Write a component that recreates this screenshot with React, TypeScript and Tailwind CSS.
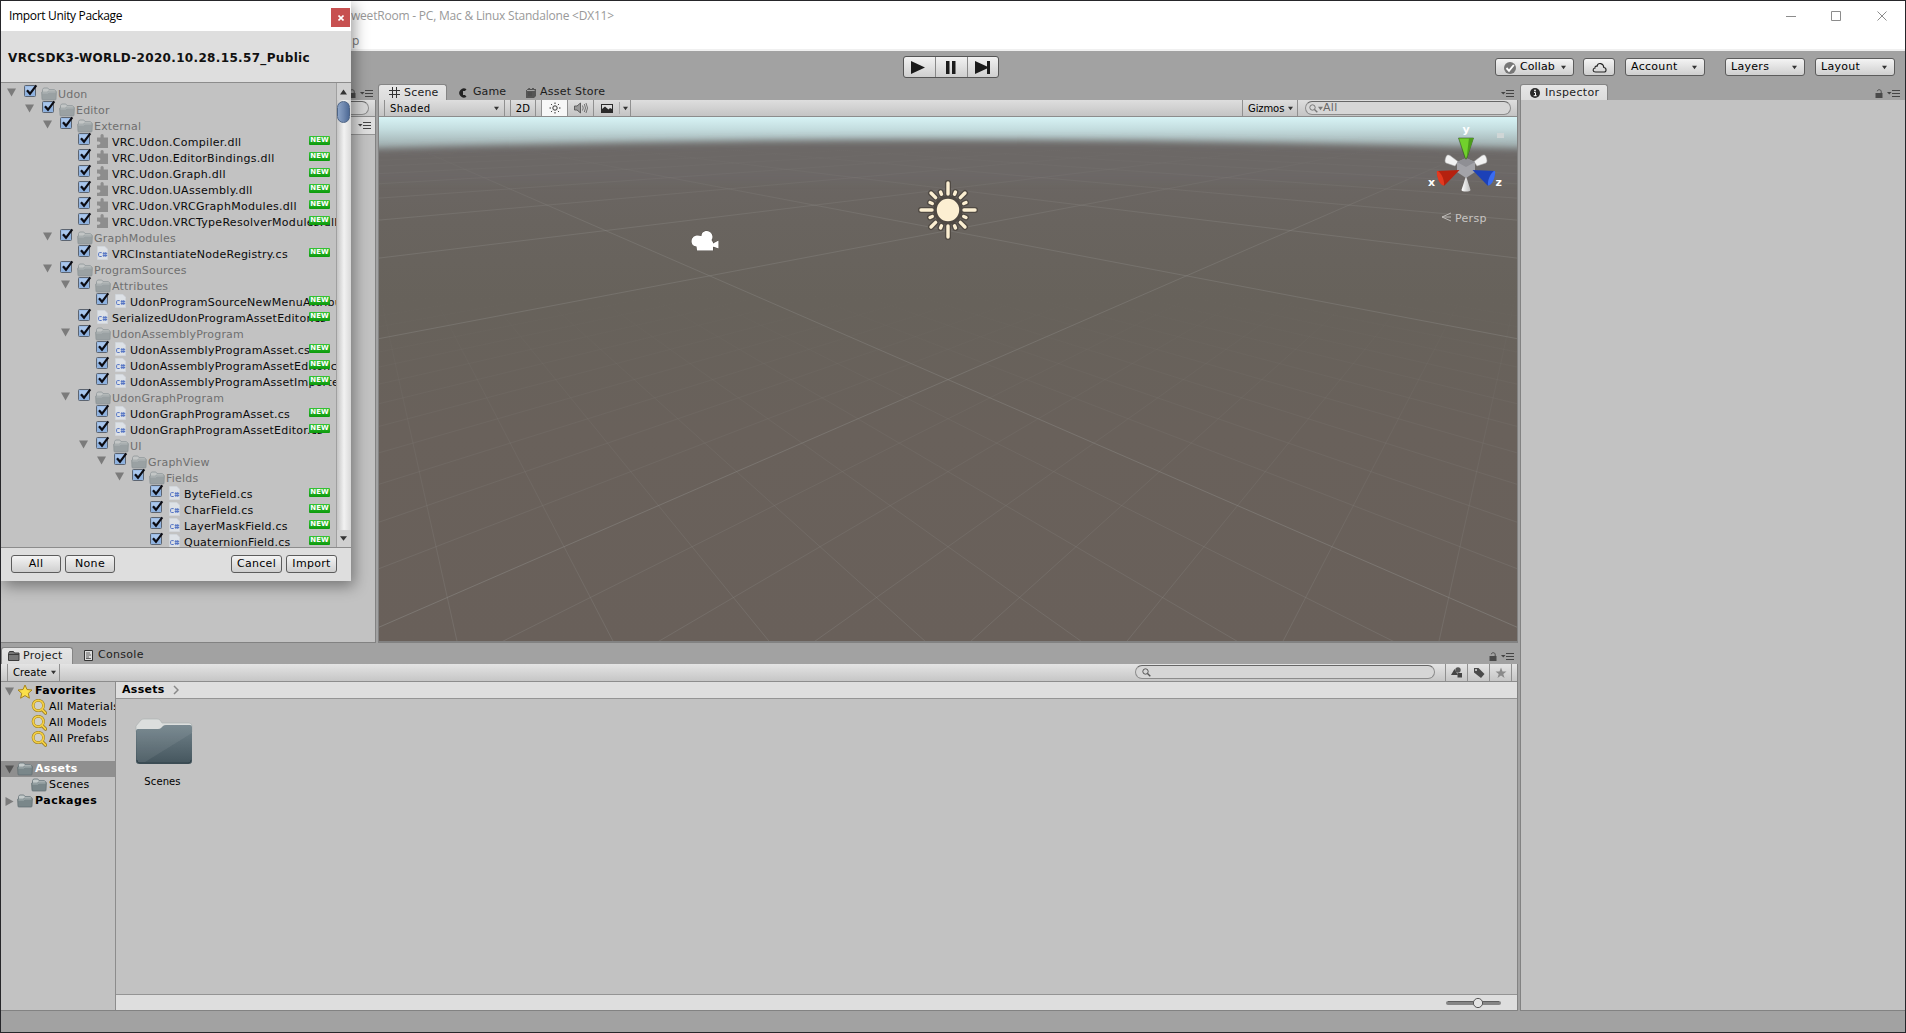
import type { ReactNode } from "react";

type Kind = "folder" | "dll" | "cs";
type Row = [depth: number, kind: Kind, name: string];

const rows: Row[] = [
  [0, "folder", "Udon"],
  [1, "folder", "Editor"],
  [2, "folder", "External"],
  [3, "dll", "VRC.Udon.Compiler.dll"],
  [3, "dll", "VRC.Udon.EditorBindings.dll"],
  [3, "dll", "VRC.Udon.Graph.dll"],
  [3, "dll", "VRC.Udon.UAssembly.dll"],
  [3, "dll", "VRC.Udon.VRCGraphModules.dll"],
  [3, "dll", "VRC.Udon.VRCTypeResolverModules.dll"],
  [2, "folder", "GraphModules"],
  [3, "cs", "VRCInstantiateNodeRegistry.cs"],
  [2, "folder", "ProgramSources"],
  [3, "folder", "Attributes"],
  [4, "cs", "UdonProgramSourceNewMenuAttribute.cs"],
  [3, "cs", "SerializedUdonProgramAssetEditor.cs"],
  [3, "folder", "UdonAssemblyProgram"],
  [4, "cs", "UdonAssemblyProgramAsset.cs"],
  [4, "cs", "UdonAssemblyProgramAssetEditor.cs"],
  [4, "cs", "UdonAssemblyProgramAssetImporter.cs"],
  [3, "folder", "UdonGraphProgram"],
  [4, "cs", "UdonGraphProgramAsset.cs"],
  [4, "cs", "UdonGraphProgramAssetEditor.cs"],
  [4, "folder", "UI"],
  [5, "folder", "GraphView"],
  [6, "folder", "Fields"],
  [7, "cs", "ByteField.cs"],
  [7, "cs", "CharField.cs"],
  [7, "cs", "LayerMaskField.cs"],
  [7, "cs", "QuaternionField.cs"],
];

/* ---------- icons ---------- */

function FolderIcon({ faded = false }: { faded?: boolean }) {
  return (
    <svg width="16" height="14" viewBox="0 0 16 14" className={faded ? "shrink-0 opacity-55" : "shrink-0"}>
      <path d="M1.5 6V2.6L2.6 1h4.2l1.2 1.6h5.5l.9 1V6z" fill="#c4cbcb" stroke="#6f7c80" strokeWidth="0.9" />
      <path d="M.6 5.2h5.6l1.2-1h7.4c.4 0 .6.2.6.6l-.4 7.4c0 .5-.3.8-.8.8H1.800c-.5 0-.8-.3-.8-.8z" fill="#7a878a" stroke="#5f6c70" strokeWidth="0.7" />
      <path d="M1.400 5.900h5.200l1.200-1h6.800" fill="none" stroke="#b4bec0" strokeWidth="0.9" />
    </svg>
  );
}

function DllIcon() {
  return (
    <svg width="11" height="14" viewBox="0 0 11 14" className="shrink-0">
      <path d="M0 3.5h3.5V1.8C3.5.8 4.2 0 5.1 0s1.6.8 1.6 1.8v1.7H11V14H0v-3.2h1.6c1 0 1.8-.8 1.8-1.7S2.600 7.400 1.600 7.400H0z" fill="#8d8d8d" />
    </svg>
  );
}

function CsIcon() {
  return (
    <svg width="11" height="14" viewBox="0 0 11 14" className="shrink-0">
      <path d="M.3.300h7.500L10.700 3.200V13.700H.3z" fill="#dde1e6" stroke="#cdd2d8" strokeWidth="0.6" />
      <path d="M4.700 6.600H2.600c-.7 0-1 .3-1 1v1.900c0 .7.3 1 1 1h2.100M6.900 6v5M8.800 6v5M5.700 7.600h4.500M5.700 9.500h4.500" fill="none" stroke="#5675c4" strokeWidth="1" />
    </svg>
  );
}

function Down({ size = 6, color = "#333" }: { size?: number; color?: string }) {
  return (
    <svg width={size} height={size} viewBox="0 0 6 6" className="shrink-0">
      <path d="M0 1h6L3 5z" fill={color} />
    </svg>
  );
}

function Foldout({ open = true, dark = false }: { open?: boolean; dark?: boolean }) {
  return (
    <svg width="9" height="9" viewBox="0 0 9 9" className="shrink-0">
      <path d={open ? "M0 .5h9L4.500 8.500z" : "M.5 0v9l8-4.500z"} fill={dark ? "#555" : "#7b7b7b"} />
    </svg>
  );
}

function Checkbox() {
  return (
    <svg width="14" height="13" viewBox="0 0 14 13" className="shrink-0">
      <rect x=".5" y="1.500" width="11" height="11" rx="1" fill="#8fb2df" stroke="#5c6470" />
      <rect x="1.500" y="2.500" width="9" height="4" fill="#a9c6ec" />
      <path d="M3 6.200l3 3.600L12.300 1.300" fill="none" stroke="#0b0b12" strokeWidth="2.200" />
    </svg>
  );
}

function PanelMenu() {
  return (
    <svg width="13" height="7" viewBox="0 0 13 7" className="shrink-0">
      <path d="M0 2h4.500L2.250 4.500z" fill="#444" />
      <path d="M5 .5h8M5 3.500h8M5 6.500h8" stroke="#444" strokeWidth="1" />
    </svg>
  );
}

function Lock() {
  return (
    <svg width="8" height="9" viewBox="0 0 8 9" className="shrink-0">
      <path d="M.5 4h7v5h-7z" fill="#4a4a4a" />
      <path d="M2.300 2.200C2.500.2 6.200.2 6.200 2.500V4" fill="none" stroke="#4a4a4a" strokeWidth="1" />
    </svg>
  );
}

function Lens({ color = "#777" }: { color?: string }) {
  return (
    <svg width="9" height="9" viewBox="0 0 9 9" className="shrink-0">
      <circle cx="3.500" cy="3.500" r="2.700" fill="none" stroke={color} strokeWidth="1" />
      <path d="M5.500 5.500L8.300 8.300" stroke={color} strokeWidth="1.400" />
    </svg>
  );
}

function YellowLens() {
  return (
    <svg width="16" height="16" viewBox="0 0 16 16" className="shrink-0">
      <path d="M10.500 10l4 4" stroke="#8f7112" strokeWidth="3.200" strokeLinecap="round" />
      <circle cx="7.300" cy="6.500" r="5.200" fill="#d0d0cb" stroke="#9b7d1c" strokeWidth="2.800" />
      <circle cx="7.300" cy="6.500" r="5.200" fill="none" stroke="#f3cf45" strokeWidth="1.800" />
      <path d="M11 10.400l3.500 3.600" stroke="#f3cf45" strokeWidth="1.900" strokeLinecap="round" />
    </svg>
  );
}

/* ---------- small controls ---------- */

function Tab({ active = false, className = "", children }: { active?: boolean; className?: string; children: ReactNode }) {
  return (
    <div
      className={`flex h-4 items-center text-[11px] text-[#1c1c1c] ${
        active ? "rounded-t-[3px] border border-b-0 border-[#858585] bg-linear-to-b from-[#e6e6e6] to-[#dcdcdc]" : "pt-px"
      } ${className}`}
    >
      {children}
    </div>
  );
}

function Button({ className = "", children }: { className?: string; children: ReactNode }) {
  return (
    <div
      className={`flex h-[18px] items-center rounded-[3px] border border-[#5c5c5c] bg-linear-to-b from-[#f4f4f4] to-[#cfcfcf] pt-px text-[11px] tracking-[0.3px] text-black ${className}`}
    >
      {children}
    </div>
  );
}

function SearchField({ className = "", children }: { className?: string; children?: ReactNode }) {
  return (
    <div className={`flex h-3.5 items-center rounded-full border border-[#8c8c8c] border-t-[#666] bg-[#d6d6d6] ${className}`}>
      {children}
    </div>
  );
}

/* ---------- scene view ---------- */

// Ground grid seen along its diagonal: x = cx + L*s/(D+d), y = hy + K/(D+d)
function project(a: number, b: number): [number, number] {
  const w = 15.5 + a + b;
  return [569 + (608 * (a - b)) / w, -2 + 4101 / w];
}

function gridLine(i: number, flip: boolean) {
  const near = 4 - 15.5 - i;
  const p = flip ? project(near, i) : project(i, near);
  const q = flip ? project(220, i) : project(i, 220);
  return `M${p[0].toFixed(1)} ${p[1].toFixed(1)}L${q[0].toFixed(1)} ${q[1].toFixed(1)}`;
}

function gridPath(from: number, to: number, step: number) {
  let d = "";
  for (let i = from; i <= to; i += step) {
    if (step === 1 && i % 10 === 0) continue;
    d += gridLine(i, false) + gridLine(i, true);
  }
  return d;
}

const majorGrid = gridPath(-60, 100, 10);
const minorGrid = gridPath(-29, 29, 1);

function Scene() {
  return (
    <svg width="1138" height="524" viewBox="0 0 1138 524" className="block">
      <defs>
        <linearGradient id="ground" x1="0" y1="0" x2="0" y2="1">
          <stop offset="0" stopColor="#6d6868" />
          <stop offset=".2" stopColor="#69645f" />
          <stop offset=".35" stopColor="#67625b" />
          <stop offset=".6" stopColor="#69615b" />
          <stop offset="1" stopColor="#69605a" />
        </linearGradient>
        <linearGradient id="sky" x1="0" y1="0" x2="0" y2="1">
          <stop offset="0" stopColor="#d7f3f5" />
          <stop offset=".3" stopColor="#c4dddf" />
          <stop offset=".7" stopColor="#a3b2b3" />
          <stop offset="1" stopColor="#858a8a" />
        </linearGradient>
        <linearGradient id="majorFade" gradientUnits="userSpaceOnUse" x1="0" y1="30" x2="0" y2="525">
          <stop offset="0" stopColor="#8b8985" stopOpacity="0" />
          <stop offset=".15" stopColor="#8b8985" stopOpacity=".36" />
          <stop offset="1" stopColor="#8b8985" stopOpacity=".55" />
        </linearGradient>
        <linearGradient id="minorFade" gradientUnits="userSpaceOnUse" x1="0" y1="175" x2="0" y2="525">
          <stop offset="0" stopColor="#85827e" stopOpacity="0" />
          <stop offset=".3" stopColor="#85827e" stopOpacity=".14" />
          <stop offset="1" stopColor="#85827e" stopOpacity=".4" />
        </linearGradient>
        <filter id="soft" x="-5%" y="-50%" width="110%" height="200%">
          <feGaussianBlur stdDeviation="3.5" />
        </filter>
        <linearGradient id="white" x1="0" y1="0" x2="1" y2="0">
          <stop offset="0" stopColor="#fff" />
          <stop offset="1" stopColor="#bbb" />
        </linearGradient>
      </defs>
      <rect width="1138" height="524" fill="url(#ground)" />
      <rect width="1138" height="40" fill="url(#sky)" />
      <path d="M-30 33Q569 13 1168 33V64H-30z" fill="#6c6766" filter="url(#soft)" />
      <path d={minorGrid} fill="none" stroke="url(#minorFade)" />
      <path d={majorGrid} fill="none" stroke="url(#majorFade)" />

      {/* directional light */}
      <g transform="translate(569 93)" strokeLinecap="round">
        {["#4f4943", "#fcefd2"].map((c, n) => (
          <g key={c} stroke={c} strokeWidth={n ? 3.4 : 6}>
            <circle r={n ? 9.5 : 11.5} fill={c} />
            {[0, 90, 180, 270].map((r) => (
              <path key={r} d="M0-16V-27" transform={`rotate(${r})`} />
            ))}
            {[45, 135, 225, 315].map((r) => (
              <path key={r} d="M0-17.500V-24" transform={`rotate(${r})`} />
            ))}
            {[22.5, 67.5, 112.5, 157.5, 202.5, 247.5, 292.5, 337.5].map((r) => (
              <path key={r} d="M0-17V-19.500" transform={`rotate(${r})`} />
            ))}
          </g>
        ))}
      </g>

      {/* camera */}
      <g fill="#fff" stroke="#4f4943" strokeWidth="1" paintOrder="stroke">
        <path d="M318 133.500h16v-8l-1.500-2.500c2-2 1.500-8-4.500-9-4 0-5.500 2.500-5.500 5-5-1.500-9.500 0-10 5 0 3.500 2 5 5 5.500zM334 126.500l5.500-3v8l-5.500-2z" />
      </g>

      {/* orientation gizmo */}
      <rect x="1118" y="16" width="7" height="5" fill="#cfd6d6" />
      <path d="M1067 40c1-3 3-2 4-1.500l8 6-3 4.500-9-3c-1.500-1-1-4 0-6zM1107 40c-1-3-3-2-4-1.500l-8 6 3 4.500 9-3c1.500-1 1-4 0-6z" fill="#f2f2f2" stroke="#aaa" strokeWidth=".5" />
      <path d="M1087 59l4.500 14c0 2-9 2-9 0z" fill="url(#white)" />
      <path d="M1078 45l9-4 9 4v10l-9 6-9-6z" fill="#a3a3a8" />
      <path d="M1078 45l9-4 9 4-9 5z" fill="#8f8f94" />
      <path d="M1079.500 21h15l-7 21h-1z" fill="#71d02c" stroke="#1f3b10" strokeWidth=".5" />
      <path d="M1090 21h4.500l-7 21z" fill="#4c9c1b" />
      <path d="M1058 54l22.500-1-15 15.500c-5 .5-8-12-7.500-14.500z" fill="#b5210f" />
      <path d="M1058 54c2.500-1 8 8 7 14.500-5 .5-8-12-7-14.500z" fill="#e2391f" />
      <path d="M1116 54l-22.500-1 15 15.500c5 .5 8-12 7.500-14.500z" fill="#1c41b8" />
      <path d="M1116 54c-2.500-1-8 8-7 14.500 5 .5 8-12 7-14.500z" fill="#3a6cf0" />
      <g fill="#fff" fontSize="11" fontWeight="bold">
        <text x="1083.500" y="16">y</text>
        <text x="1049" y="69">x</text>
        <text x="1116.500" y="69">z</text>
      </g>
      <path d="M1072 96l-9 4 9 4M1063 100h9" fill="none" stroke="#bdbab7" />
      <text x="1076" y="104.500" fill="#c8c5c2" fontSize="11" letterSpacing=".3">Persp</text>
    </svg>
  );
}

/* ---------- panels ---------- */

function Hierarchy() {
  return (
    <div className="flex w-[375px] flex-col">
      <div className="flex h-4 items-center justify-end gap-1 pt-[3px] pr-[3px]">
        <Lock />
        <PanelMenu />
      </div>
      <div className="flex flex-1 flex-col border-r border-b border-[#828282] bg-[#c2c2c2]">
        <div className="flex h-[17px] items-center justify-end border-b border-[#8c8c8c] bg-linear-to-b from-[#e0e0e0] to-[#c6c6c6] pr-1.5">
          <SearchField className="w-60" />
        </div>
        <div className="flex h-[18px] items-center justify-end border-b border-[#949494] bg-[#dedede] pr-1">
          <PanelMenu />
        </div>
      </div>
    </div>
  );
}

function SceneToolbar() {
  return (
    <div className="flex h-[17px] items-stretch border-b border-[#8c8c8c] bg-linear-to-b from-[#dedede] to-[#c4c4c4] text-[10px] text-black">
      <div className="ml-[5px] flex w-[121px] items-center justify-between border-x border-[#909090] px-[5px]">
        <span className="tracking-[0.5px]">Shaded</span>
        <Down size={5} />
      </div>
      <div className="ml-[5px] flex w-[26px] items-center justify-center border-x border-[#909090] tracking-[0.3px]">2D</div>
      <div className="ml-[5px] flex w-[27px] items-center justify-center border-x border-[#909090] bg-[#f7f7f7]">
        <svg width="12" height="12" viewBox="0 0 12 12">
          <circle cx="6" cy="6" r="2.200" fill="none" stroke="#333" />
          <path d="M6 .5v1.500M6 10v1.500M.5 6H2M10 6h1.500M2.100 2.100l1 1M8.900 8.900l1 1M2.100 9.900l1-1M8.900 3.100l1-1" stroke="#333" />
        </svg>
      </div>
      <div className="flex w-[26px] items-center justify-center border-r border-[#909090]">
        <svg width="14" height="12" viewBox="0 0 14 12">
          <path d="M.5 4h2.500L6.500 1v10L3 8H.5z" fill="#999" stroke="#555" strokeWidth=".9" />
          <path d="M8.500 3.500q1.500 2.500 0 5M10.300 2q2.400 4 0 8M12 1q3 5 0 10" fill="none" stroke="#666" strokeWidth=".9" />
        </svg>
      </div>
      <div className="flex w-[37px] items-center border-r border-[#909090] pl-[7px]">
        <svg width="12" height="9" viewBox="0 0 12 9">
          <rect width="12" height="9" fill="#2b2b2b" />
          <path d="M1 1h10v4L9 4 7.500 5.500 4 2.500 1 5z" fill="#ddd" />
        </svg>
        <span className="mr-[3px] ml-[6px] h-3 w-px bg-[#aaa]" />
        <Down size={5} />
      </div>
      <div className="ml-auto flex w-[56px] items-center justify-between border-x border-[#909090] pr-[4px] pl-[5px]">
        <span className="tracking-[-0.1px]">Gizmos</span>
        <Down size={5} />
      </div>
      <SearchField className="mt-px mr-[6px] ml-[7px] w-[206px] pl-[3px] text-[11px] text-[#666]">
        <Lens />
        <Down size={5} color="#777" />
        <span className="tracking-[0.3px]">All</span>
      </SearchField>
    </div>
  );
}

function ScenePanel() {
  return (
    <div className="flex w-[1140px] flex-col">
      <div className="flex h-4 items-center">
        <Tab active className="w-[69px] pl-[10px]">
          <svg width="11" height="11" viewBox="0 0 11 11">
            <path d="M3.500 0v11M7.500 0v11M0 3.500h11M0 7.500h11" stroke="#333" />
          </svg>
          <span className="mt-px ml-1 tracking-[0.2px]">Scene</span>
        </Tab>
        <Tab className="ml-[11px] w-[67px]">
          <svg width="10" height="10" viewBox="0 0 10 10">
            <path d="M8.500 1.200A4.600 4.600 0 1 0 8.500 8.800L7 7H5V3h2z" fill="#222" />
          </svg>
          <span className="ml-[5px] tracking-[0.1px]">Game</span>
        </Tab>
        <Tab>
          <svg width="12" height="11" viewBox="0 0 12 11">
            <path d="M1 4h8v7H1zM9 4l2-1.500V9L9 11z" fill="#555" />
            <path d="M1 4L2.500 2.500H11M3 2.500q1-3 2.500 0M6.500 2.500q1.500-3 3 0M4 5v4M6 5v4" fill="none" stroke="#444" strokeWidth=".8" />
          </svg>
          <span className="ml-[3px] tracking-[0.25px]">Asset Store</span>
        </Tab>
        <div className="mt-0.5 mr-[4px] ml-auto flex">
          <PanelMenu />
        </div>
      </div>
      <div className="flex flex-1 flex-col border-x border-b-2 border-[#828282]">
        <SceneToolbar />
        <Scene />
      </div>
    </div>
  );
}

function TreeLine({ icon, label, indent = false }: { icon: ReactNode; label: string; indent?: boolean }) {
  return (
    <div className={`flex h-4 items-center gap-0.5 text-[11px] tracking-[0.2px] whitespace-nowrap text-black ${indent ? "pl-[30px]" : ""}`}>
      {icon}
      <span>{label}</span>
    </div>
  );
}

function ProjectPanel() {
  return (
    <div className="flex h-[364px] flex-col">
      <div className="flex h-[17px] items-start">
        <Tab active className="h-[17px] w-[72px] pl-1.5">
          <svg width="12" height="10" viewBox="0 0 12 10">
            <path d="M.5 9.500v-7l1-2h4l1 1.500h4.500v7.500z" fill="#777" stroke="#3c3c3c" />
            <path d="M.5 3.500h10.500" stroke="#3c3c3c" />
          </svg>
          <span className="ml-[3px] tracking-[0.3px]">Project</span>
        </Tab>
        <Tab className="ml-[11px]">
          <svg width="9" height="11" viewBox="0 0 9 11">
            <path d="M.5.500h8v10h-8z" fill="#ddd" stroke="#333" />
            <path d="M2 3h4M2 5h5M2 7h3M2 8.500h5" stroke="#444" strokeWidth=".8" />
          </svg>
          <span className="ml-[5px] tracking-[0.3px]">Console</span>
        </Tab>
        <div className="mt-[5px] mr-[4px] ml-auto flex items-center gap-1">
          <Lock />
          <PanelMenu />
        </div>
      </div>
      <div className="flex flex-1 flex-col border-r border-b border-[#828282] bg-[#c2c2c2]">
        <div className="flex h-[18px] items-stretch border-b border-[#8c8c8c] bg-linear-to-b from-[#e4e4e4] to-[#c6c6c6] text-[10px]">
          <div className="ml-[6px] flex w-[53px] items-center justify-between border-x border-[#909090] pr-[3px] pl-[5px]">
            <span className="tracking-[0.1px]">Create</span>
            <Down size={5} />
          </div>
          <SearchField className="mt-px ml-auto w-[300px] pl-1.5">
            <Lens color="#555" />
          </SearchField>
          <div className="ml-[10px] flex w-[22px] items-center justify-center border-l border-[#909090]">
            <svg width="12" height="11" viewBox="0 0 12 11">
              <path d="M0 8l3.500-6L7 8z" fill="#444" />
              <circle cx="7" cy="3" r="2.700" fill="#555" />
              <path d="M6.500 6h4.500v4.500H6.500z" fill="#444" />
            </svg>
          </div>
          <div className="flex w-[22px] items-center justify-center border-l border-[#909090]">
            <svg width="12" height="12" viewBox="0 0 12 12">
              <path d="M1 1h4.500l6 6L8 11 1 5.500z" fill="#4a4a4a" />
              <circle cx="3" cy="3" r="1" fill="#ddd" />
            </svg>
          </div>
          <div className="mr-[5px] flex w-[23px] items-center justify-center border-x border-[#909090]">
            <svg width="12" height="12" viewBox="0 0 12 12">
              <path d="M6 .5l1.500 4h4L8.300 7l1.200 4L6 8.600 2.500 11l1.200-4L.5 4.500h4z" fill="#8a8a8a" />
            </svg>
          </div>
        </div>
        <div className="flex flex-1">
          <div className="flex w-[115px] flex-col overflow-hidden border-r border-[#8c8c8c] pt-px">
            <div className="flex h-4 items-center pl-1">
              <Foldout />
              <svg width="16" height="15" viewBox="0 0 16 15" className="ml-[3px] shrink-0">
                <path d="M8 1l2 4.500 5 .5-3.700 3.300 1.100 4.900L8 11.600l-4.400 2.600 1.100-4.900L1 6l5-.5z" fill="#fbe04a" stroke="#a8841d" />
              </svg>
              <span className="ml-[2px] text-[11px] font-bold tracking-[0.4px]">Favorites</span>
            </div>
            <TreeLine indent icon={<YellowLens />} label="All Materials" />
            <TreeLine indent icon={<YellowLens />} label="All Models" />
            <TreeLine indent icon={<YellowLens />} label="All Prefabs" />
            <div className="mt-[14px] flex h-4 items-center bg-[#8f8f8f] pl-1">
              <Foldout dark />
              <span className="mr-[2px] ml-[3px]"><FolderIcon /></span>
              <span className="text-[11px] font-bold tracking-[0.3px] text-white">Assets</span>
            </div>
            <TreeLine indent icon={<FolderIcon />} label="Scenes" />
            <div className="flex h-4 items-center pl-1">
              <Foldout open={false} />
              <span className="mr-[2px] ml-[3px]"><FolderIcon /></span>
              <span className="text-[11px] font-bold tracking-[0.5px]">Packages</span>
            </div>
          </div>
          <div className="flex flex-1 flex-col">
            <div className="flex h-[17px] items-center border-b border-[#949494] bg-[#dedede] pl-[6px] text-[11px] font-bold">
              <span className="tracking-[0.3px]">Assets</span>
              <svg width="6" height="10" viewBox="0 0 6 10" className="ml-[8px]">
                <path d="M1 1l4 4-4 4" fill="none" stroke="#888" strokeWidth="1.500" />
              </svg>
            </div>
            <div className="flex flex-1 items-start pt-[19px] pl-[19px]">
              <div className="flex w-[58px] flex-col items-center">
                <svg width="58" height="48" viewBox="0 0 58 48">
                  <defs>
                    <linearGradient id="bigFolder" x1="0" y1="0" x2="0" y2="1">
                      <stop offset="0" stopColor="#71828a" />
                      <stop offset="1" stopColor="#44555d" />
                    </linearGradient>
                  </defs>
                  <path d="M1 14V8l5-6q1-1 3-1h13q2 0 3 1l2 3h27q3 0 3 3v6z" fill="#dcdedd" stroke="#aab0b0" strokeWidth=".6" />
                  <path d="M1 13q0-2 2-2h20q2 0 3-1l2-2q1-1 3-1h24q2 0 2 2v34q0 3-3 3H4q-3 0-3-3z" fill="url(#bigFolder)" />
                  <path d="M57 15L10 44H2V13q0-2 2-2h20l5-4h26q2 0 2 2z" fill="#fff" opacity=".07" />
                  <path d="M2 42q0 3 3 3h48q3 0 3-3" fill="none" stroke="#33434a" />
                </svg>
                <span className="mt-[8px] -ml-[3px] text-[10px] tracking-[0.1px]">Scenes</span>
              </div>
            </div>
            <div className="flex h-4 items-center justify-end border-t border-[#949494] bg-[#dedede] pr-4">
              <svg width="55" height="12" viewBox="0 0 55 12">
                <rect y="4" width="55" height="4" rx="2" fill="#858585" />
                <path d="M2 4.500h51" stroke="#5f5f5f" />
                <circle cx="32" cy="6" r="4.600" fill="#e4e4e4" stroke="#555" />
              </svg>
            </div>
          </div>
        </div>
      </div>
    </div>
  );
}

function Inspector() {
  return (
    <div className="flex flex-1 flex-col">
      <div className="flex h-4 items-center">
        <Tab active className="w-[88px] pl-[9px]">
          <svg width="10" height="10" viewBox="0 0 10 10">
            <circle cx="5" cy="5" r="5" fill="#2b2b2b" />
            <path d="M4 4.500h1.500v3.200M3.700 7.700h3" stroke="#fff" fill="none" />
            <circle cx="5" cy="2.500" r=".9" fill="#fff" />
          </svg>
          <span className="mt-px ml-[5px] tracking-[0.35px]">Inspector</span>
        </Tab>
        <div className="mt-0.5 mr-[5px] ml-auto flex items-center gap-1">
          <Lock />
          <PanelMenu />
        </div>
      </div>
      <div className="flex-1 border-b border-l border-[#828282] bg-[#c2c2c2]" />
    </div>
  );
}

/* ---------- import dialog ---------- */

function ImportRow({ row: [depth, kind, name] }: { row: Row }) {
  return (
    <div className="relative flex h-4 shrink-0" style={{ paddingLeft: 6 + depth * 18 }}>
      <div className="w-4 shrink-0 pt-[5px]">{kind === "folder" && <Foldout />}</div>
      <div className="w-[18px] shrink-0 pt-px pl-px">
        <Checkbox />
      </div>
      <div className={kind === "folder" ? "w-[17px] shrink-0 pt-[4px]" : "w-[17px] shrink-0 pt-[3px] pl-0.5"}>
        {kind === "folder" ? <FolderIcon faded /> : kind === "dll" ? <DllIcon /> : <CsIcon />}
      </div>
      <span
        className={`pt-[4px] text-[11px] leading-4 whitespace-nowrap ${
          kind === "folder" ? "tracking-[0.2px] text-[#6f6f6f]" : kind === "dll" ? "tracking-[0.3px] text-[#0a0a0a]" : "tracking-[0.24px] text-[#0a0a0a]"
        }`}
      >
        {name}
      </span>
      {kind !== "folder" && (
        <div className="absolute top-[5px] right-[6px] flex h-[9px] w-[21px] items-center justify-center rounded-[1px] bg-linear-to-b from-[#35c335] to-[#0a9a0a] text-[7px] leading-none font-bold text-white">
          NEW
        </div>
      )}
    </div>
  );
}

function ImportDialog() {
  return (
    <div className="absolute top-0 left-0 flex h-[580px] w-[350px] flex-col bg-[#dedede] shadow-[3px_5px_14px_rgba(0,0,0,0.4)]">
      <div className="flex h-[30px] items-center justify-between bg-white pr-px pl-[8px]">
        <span className="font-['Open_Sans','Noto_Sans',sans-serif] text-[12px] tracking-[-0.33px] text-black">Import Unity Package</span>
        <div className="mt-[3px] flex h-[19px] w-[19px] items-center justify-center bg-[#c75050]">
          <svg width="6" height="6" viewBox="0 0 6 6">
            <path d="M.5.500l5 5M5.500.500l-5 5" stroke="#fff" strokeWidth="1.600" />
          </svg>
        </div>
      </div>
      <div className="flex h-[52px] items-center border-b border-[#8c8c8c] pt-0.5 pl-[7px] text-[12px] font-bold tracking-[0.34px] whitespace-nowrap text-[#111]">
        VRCSDK3-WORLD-2020.10.28.15.57_Public
      </div>
      <div className="flex h-[465px] border-b border-[#8c8c8c] bg-[#c2c2c2]">
        <div className="flex w-[335px] flex-col overflow-hidden">
          {rows.map((row) => (
            <ImportRow key={row[2]} row={row} />
          ))}
        </div>
        <div className="flex flex-1 flex-col border-l border-[#a0a0a0] bg-linear-to-r from-[#c4c4c4] via-[#f2f2f2] to-[#d8d8d8]">
          <div className="flex h-[17px] items-center justify-center bg-[#d0d0d0] pr-px">
            <svg width="7" height="6" viewBox="0 0 7 6"><path d="M0 5.500h7L3.500.500z" fill="#333" /></svg>
          </div>
          <div className="mt-px h-[22px] w-[13px] rounded-full border border-[#4e6484] bg-linear-to-r from-[#8ba3c6] via-[#7089b0] to-[#4e6a96]" />
          <div className="mt-auto flex h-[17px] items-center justify-center bg-[#d0d0d0] pr-px">
            <Down size={7} />
          </div>
        </div>
      </div>
      <div className="flex flex-1 items-center gap-1 pr-[14px] pb-px pl-[10px]">
        <Button className="w-[50px] justify-center">All</Button>
        <Button className="w-[50px] justify-center">None</Button>
        <Button className="ml-auto w-[51px] justify-center">Cancel</Button>
        <Button className="w-[51px] justify-center">Import</Button>
      </div>
    </div>
  );
}

/* ---------- window ---------- */

function TitleBar() {
  return (
    <div className="h-[50px] border-b-2 border-[#f0f0f0] bg-white font-['Open_Sans','Noto_Sans',sans-serif] text-[12px] text-[#999]">
      <div className="flex h-[29px] items-center pl-[350px]">
        <span className="tracking-[-0.21px] whitespace-nowrap">weetRoom - PC, Mac &amp; Linux Standalone &lt;DX11&gt;</span>
        <svg width="102" height="12" viewBox="0 0 102 12" className="mr-[17px] ml-auto" fill="none" stroke="#8c8c8c">
          <path d="M0 6.500h10M45.500 1.500h9v9h-9zM91.500 1.500l9 9M100.500 1.500l-9 9" />
        </svg>
      </div>
      <div className="flex h-[19px] items-center pt-0.5 pl-[351px] text-[#777]">p</div>
    </div>
  );
}

function Toolbar() {
  return (
    <div className="flex h-[33px] items-start">
      <div className="mt-[5px] ml-[902px] flex h-[22px] w-[96px] rounded-[3px] border border-[#555] bg-linear-to-b from-[#f2f2f2] to-[#cfcfcf]">
        <div className="flex w-8 items-center justify-center border-r border-[#888]">
          <svg width="14" height="13" viewBox="0 0 14 13" className="-ml-[3px]"><path d="M0 0l14 6.500L0 13z" fill="#1a1a1a" /></svg>
        </div>
        <div className="flex w-8 items-center justify-center border-r border-[#888]">
          <svg width="10" height="13" viewBox="0 0 10 13" className="-ml-0.5"><path d="M0 0h3.500v13H0zM6 0h3.500v13H6z" fill="#1a1a1a" /></svg>
        </div>
        <div className="flex flex-1 items-center justify-center">
          <svg width="15" height="13" viewBox="0 0 15 13" className="-ml-0.5"><path d="M0 0l12 5.500V0h3v13h-3V7.500L0 13z" fill="#1a1a1a" /></svg>
        </div>
      </div>
      <div className="mt-[7px] mr-[10px] ml-auto flex">
        <Button className="w-[79px] pl-2">
          <svg width="12" height="12" viewBox="0 0 12 12">
            <circle cx="6" cy="6" r="6" fill="#777" />
            <path d="M2.500 6l2.500 2.800L9.800 3" fill="none" stroke="#fff" strokeWidth="1.900" />
          </svg>
          <span className="mr-1.5 ml-1 tracking-[0.1px]">Collab</span>
          <Down size={5} />
        </Button>
        <Button className="ml-[9px] w-8 justify-center">
          <svg width="15" height="11" viewBox="0 0 15 11">
            <path d="M3.500 10h8.500c2.500 0 3-4-.2-4.500C11.500 1 6 0 5 4.300 3.500 3.700 2.600 5 3 6 .3 6.500.5 10 3.500 10z" fill="none" stroke="#222" strokeWidth="1.100" />
          </svg>
        </Button>
        <Button className="ml-[10px] w-20 justify-between pr-[7px] pl-[5px]">
          Account
          <Down size={5} />
        </Button>
        <Button className="ml-5 w-20 justify-between pr-[7px] pl-[5px]">
          Layers
          <Down size={5} />
        </Button>
        <Button className="ml-[10px] w-20 justify-between pr-[7px] pl-[5px]">
          Layout
          <Down size={5} />
        </Button>
      </div>
    </div>
  );
}

export default function App() {
  return (
    <div className="relative flex h-[1033px] w-[1906px] flex-col overflow-hidden border border-[#26262a] bg-[#a2a2a2] font-['DejaVu_Sans',Verdana,sans-serif]">
      <TitleBar />
      <Toolbar />
      <div className="flex h-[927px] gap-[2px]">
        <div className="flex w-[1517px] flex-col justify-between">
          <div className="flex h-[559px] justify-between">
            <Hierarchy />
            <ScenePanel />
          </div>
          <ProjectPanel />
        </div>
        <Inspector />
      </div>
      <ImportDialog />
    </div>
  );
}
